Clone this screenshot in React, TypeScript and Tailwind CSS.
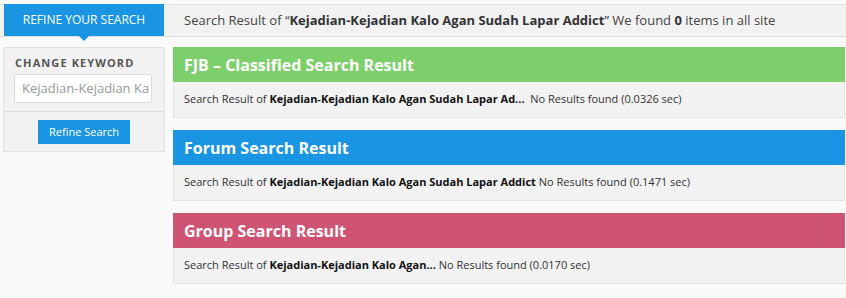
import React from "react";

const sections = [
  {
    title: "FJB – Classified Search Result",
    bg: "bg-[#7dcf6c]",
    kw: "Kejadian-Kejadian Kalo Agan Sudah Lapar Ad...",
    time: "0.0326",
    gap: true,
  },
  {
    title: "Forum Search Result",
    bg: "bg-[#1a95e4]",
    kw: "Kejadian-Kejadian Kalo Agan Sudah Lapar Addict",
    time: "0.1471",
    gap: false,
  },
  {
    title: "Group Search Result",
    bg: "bg-[#cf5473]",
    kw: "Kejadian-Kejadian Kalo Agan...",
    time: "0.0170",
    gap: false,
  },
];

export default function App() {
  return (
    <div
      className="w-[846px] h-[298px] bg-[#fafafa] overflow-hidden"
      style={{ fontFamily: '"Open Sans", "Liberation Sans", sans-serif' }}
    >
      {/* top bar */}
      <div className="flex mt-[4px] h-[33px] border-y border-[#dedede] bg-[#f2f2f2]">
        <div className="relative ml-[4px] w-[160px] bg-[#1a95e4] flex items-center justify-center text-white text-[12px] uppercase -mt-px">
          Refine Your Search
          <div className="absolute left-1/2 -translate-x-1/2 -bottom-[5px] w-0 h-0 border-l-[6px] border-r-[6px] border-t-[6px] border-l-transparent border-r-transparent border-t-[#1a95e4]" />
        </div>
        <div className="flex-1 flex items-center pl-[20px] text-[13px] text-[#444]">
          <span>
            Search Result of “
            <b className="font-bold text-[#333]">Kejadian-Kejadian Kalo Agan Sudah Lapar Addict</b>” We found{" "}
            <b className="font-bold text-[#333]">0</b> items in all site
          </span>
        </div>
      </div>

      <div className="flex mt-[10px]">
        {/* left panel */}
        <div className="ml-[3px] w-[162px] h-[105px] shrink-0 bg-[#f2f2f2] border border-[#e2e2e2]">
          <div className="px-[10px] pt-[8px]">
            <div className="text-[11px] font-bold tracking-[1.1px] text-[#555] leading-[14px] pl-px">
              CHANGE KEYWORD
            </div>
            <div className="mt-[4px] h-[29px] w-[138px] bg-white border border-[#dcdcdc] rounded-[2px] flex items-center px-[7px] text-[13px] text-[#999] whitespace-nowrap overflow-hidden">
              Kejadian-Kejadian Ka
            </div>
          </div>
          <div className="mt-[8px] border-t border-[#dedede]" />
          <div className="flex justify-center mt-[8px]">
            <div className="w-[92px] h-[24px] bg-[#1a95e4] text-white text-[11px] flex items-center justify-center">
              Refine Search
            </div>
          </div>
        </div>

        {/* results */}
        <div className="ml-[8px] flex-1 mr-px flex flex-col gap-[12px]">
          {sections.map((s) => (
            <div key={s.title}>
              <div className={`${s.bg} h-[35px] flex items-center px-[11px] text-white font-bold text-[16px]`}>
                {s.title}
              </div>
              <div className="h-[36px] bg-[#f2f2f2] border border-t-0 border-[#e4e4e4] flex items-center px-[10px] text-[11px] text-[#333] whitespace-nowrap">
                <span>
                  Search Result of <b className="font-bold text-[#111]">{s.kw}</b>
                  {s.gap ? "\u00a0\u00a0" : " "}No Results found ({s.time} sec)
                </span>
              </div>
            </div>
          ))}
        </div>
      </div>
    </div>
  );
}
